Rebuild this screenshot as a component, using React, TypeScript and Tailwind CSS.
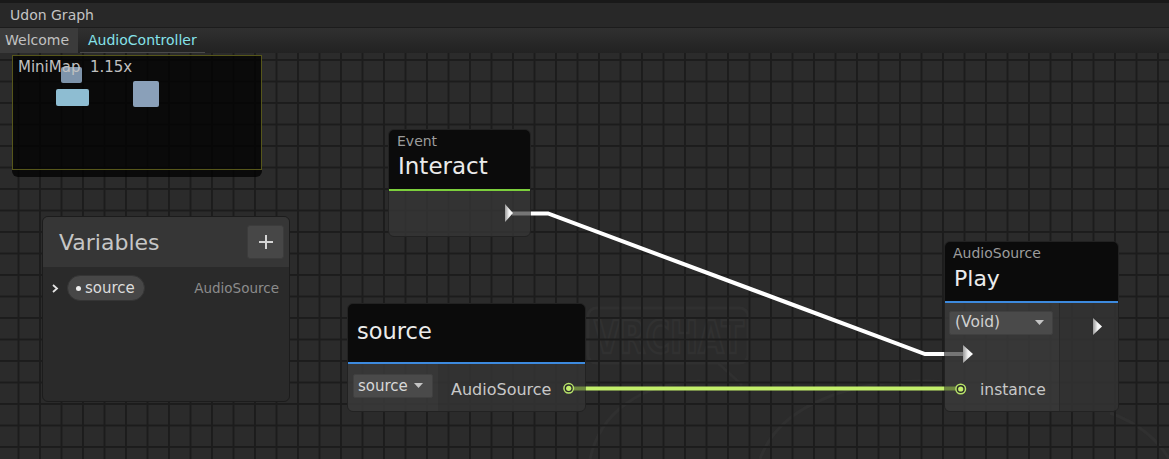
import React from "react";

function Caret() {
  return (
    <svg width="9" height="6" viewBox="0 0 9 6">
      <polygon points="0,0 9,0 4.5,5" fill="#c4c4c4" />
    </svg>
  );
}

export default function App() {
  return (
    <div className="w-[1169px] h-[459px] flex flex-col bg-[#191919] font-['DejaVu_Sans',sans-serif] overflow-hidden">
      <div className="h-[3px] bg-[#191919]" />
      <div className="h-[24px] bg-[#282828] flex items-center pl-[10px] text-[14px] text-[#c4c4c4]">
        Udon Graph
      </div>
      <div className="h-[26px] flex items-stretch border-t border-[#1c1c1c] bg-[linear-gradient(to_bottom,#303030,#222222)]">
        <div className="w-[78px] bg-[#3b3b3b] pl-[5px] flex items-center text-[14px] text-[#c2c2c2]">
          Welcome
        </div>
        <div className="ml-[2px] w-[125px] flex items-center pl-[8px] text-[14px] text-[#86e2ea] border-b border-[#4a4a4a]">
          AudioController
        </div>
      </div>

      <div className="relative flex-1 bg-[#2b2b2b] overflow-hidden">
        {/* watermark */}
        <svg className="absolute inset-0 pointer-events-none" width="1169" height="406">
          <g fill="none" stroke="#303030" strokeWidth="3">
            <rect x="588" y="255" width="160" height="55" rx="8" />
            <path d="M718 310 L742 332" />
            <path d="M590 406 C 600 360, 640 330, 700 328" />
            <path d="M760 406 C 780 350, 860 320, 960 330" />
            <path d="M1110 360 C 1140 370, 1160 390, 1169 406" />
          </g>
          <text
            x="594"
            y="300"
            fontFamily="DejaVu Sans"
            fontWeight="bold"
            fontSize="44"
            textLength="150"
            lengthAdjust="spacingAndGlyphs"
            fill="none"
            stroke="#313131"
            strokeWidth="2.5"
          >
            VRCHAT
          </text>
        </svg>

        {/* grid */}
        <div className="absolute inset-0 bg-[linear-gradient(to_right,#1c1c1c_2px,transparent_2px),linear-gradient(to_bottom,#1c1c1c_2px,transparent_2px)] bg-[length:21.5px_21.5px] bg-[position:17.5px_6px]" />

        {/* MiniMap */}
        <div className="absolute left-[12px] top-[2px] w-[250px] h-[122px] rounded-b-[6px] bg-black/75">
          <div className="relative h-[115px] border border-[#56561a]">
            <div className="absolute left-[48px] top-[11px] w-[21px] h-[16px] rounded-[2px] bg-[#8ba3bd]/90" />
            <div className="absolute left-[43px] top-[33px] w-[33px] h-[17px] rounded-[2px] bg-[#8ebdd2]" />
            <div className="absolute left-[120px] top-[25px] w-[26px] h-[26px] rounded-[2px] bg-[#8aa0b9]" />
            <div className="relative pl-[5px] pt-[1px] text-[15px] leading-[20px] text-[#c0c0c0] whitespace-pre">
              MiniMap  1.15x
            </div>
          </div>
        </div>

        {/* Variables panel */}
        <div className="absolute left-[42px] top-[163px] w-[248px] h-[186px] rounded-[6px] border border-[#1c1c1c] bg-[#2a2a2a] flex flex-col overflow-hidden">
          <div className="h-[50px] bg-[#363636] flex items-center justify-between pl-[16px] pr-[5px]">
            <span className="text-[22px] text-[#c6c6c6]">Variables</span>
            <div className="w-[37px] h-[34px] rounded-[3px] bg-[#474747] border border-[#3c3c3c] flex items-center justify-center">
              <svg width="16" height="16" viewBox="0 0 16 16">
                <path d="M8 1 V15 M1 8 H15" stroke="#d4d4d4" strokeWidth="2" />
              </svg>
            </div>
          </div>
          <div className="mt-[8px] flex items-center pl-[9px] pr-[10px]">
            <svg width="7" height="9" viewBox="0 0 7 9">
              <polyline points="1,1 5,4.5 1,8" fill="none" stroke="#e4e4e4" strokeWidth="1.8" />
            </svg>
            <div className="ml-[8px] w-[78px] h-[26px] rounded-full bg-[#474747] border border-[#353535] flex items-center pl-[8px]">
              <div className="w-[5px] h-[5px] rounded-full bg-[#f0f0f0]" />
              <span className="ml-[4px] text-[15px] text-[#dcdcdc]">source</span>
            </div>
            <span className="ml-auto text-[13.5px] text-[#8c8c8c]">AudioSource</span>
          </div>
        </div>

        {/* Interact node */}
        <div className="absolute left-[388px] top-[76px] w-[143px] h-[108px] rounded-[6px] border border-[#222222] overflow-hidden flex flex-col">
          <div className="h-[59px] bg-[#0b0b0b] pl-[8px] pt-[2px] flex flex-col">
            <span className="text-[14px] leading-[18px] text-[#9c9c9c]">Event</span>
            <span className="mt-[2px] pl-[1px] text-[23px] leading-[28px] text-[#ebebeb]">Interact</span>
          </div>
          <div className="h-[2px] bg-[#7ccf3c]" />
          <div className="flex-1 bg-[#363636]/80" />
        </div>

        {/* source node */}
        <div className="absolute left-[347px] top-[250px] w-[239px] h-[109px] rounded-[6px] border border-[#222222] overflow-hidden flex flex-col">
          <div className="h-[58px] bg-[#0b0b0b] flex items-center pl-[9px] pb-[4px]">
            <span className="text-[22.5px] leading-[28px] text-[#ebebeb]">source</span>
          </div>
          <div className="h-[2px] bg-[#3d8ade]" />
          <div className="flex-1 flex">
            <div className="w-[90px] bg-[#3a3a3a]/85 pl-[5px] pt-[10px]">
              <div className="w-[80px] h-[24px] rounded-[2px] bg-[#4a4a4a] border border-[#404040] flex items-center justify-between pl-[4px] pr-[9px]">
                <span className="text-[15px] text-[#d8d8d8]">source</span>
                <Caret />
              </div>
            </div>
            <div className="flex-1 bg-[#343434]/85 flex items-center pl-[13px] pt-[4px]">
              <span className="text-[16px] text-[#c8c8c8]">AudioSource</span>
            </div>
          </div>
        </div>

        {/* Play node */}
        <div className="absolute left-[944px] top-[188px] w-[175px] h-[171px] rounded-[6px] border border-[#222222] overflow-hidden flex flex-col">
          <div className="h-[59px] bg-[#0b0b0b] pl-[8px] pt-[2px] flex flex-col">
            <span className="text-[14px] leading-[18px] text-[#9c9c9c]">AudioSource</span>
            <span className="mt-[3px] pl-[1px] text-[22px] leading-[28px] text-[#ebebeb]">Play</span>
          </div>
          <div className="h-[2px] bg-[#3d8ade]" />
          <div className="flex-1 flex">
            <div className="w-[114px] bg-[#3a3a3a]/85 pl-[4px] pt-[8px] flex flex-col">
              <div className="w-[104px] h-[24px] rounded-[2px] bg-[#4a4a4a] border border-[#404040] flex items-center justify-between pl-[5px] pr-[8px]">
                <span className="text-[15.5px] text-[#d0d0d0]">(Void)</span>
                <Caret />
              </div>
              <div className="mt-[44px] h-[24px] flex items-center pl-[31px]">
                <span className="text-[15.5px] text-[#c8c8c8]">instance</span>
              </div>
            </div>
            <div className="flex-1 bg-[#323232]/85 border-l border-[#2a2a2a]" />
          </div>
        </div>

        {/* edges, ports, flow arrows */}
        <svg className="absolute inset-0 pointer-events-none" width="1169" height="406">
          <defs>
            <linearGradient id="arr" x1="0" y1="0" x2="1" y2="0">
              <stop offset="0" stopColor="#9a9a9a" />
              <stop offset="0.5" stopColor="#f2f2f2" />
              <stop offset="1" stopColor="#ffffff" />
            </linearGradient>
          </defs>
          <line x1="512" y1="160.5" x2="531" y2="160.5" stroke="#767676" strokeWidth="4" />
          <polyline
            points="531,160.5 548,160.5 925,301 944,301"
            fill="none"
            stroke="#ffffff"
            strokeWidth="4"
          />
          <line x1="944" y1="301" x2="964" y2="301" stroke="#767676" strokeWidth="4" />
          <polygon points="505,151 505,169 513,160" fill="url(#arr)" />
          <polygon points="963,292 963,310 973,301" fill="url(#arr)" />
          <polygon points="1093,265 1093,282 1102,273.5" fill="url(#arr)" />

          <line x1="574" y1="335.5" x2="586" y2="335.5" stroke="#6e8840" strokeWidth="4" />
          <line x1="586" y1="335.5" x2="944" y2="335.5" stroke="#c3ef6b" strokeWidth="4" />
          <line x1="944" y1="335.5" x2="956" y2="335.5" stroke="#6e8840" strokeWidth="4" />
          <circle cx="568.7" cy="335.3" r="4.8" fill="#2a2a2a" stroke="#b8e46a" strokeWidth="1.5" />
          <circle cx="568.7" cy="335.3" r="2.6" fill="#c4f06c" />
          <circle cx="960.7" cy="336" r="4.8" fill="#2a2a2a" stroke="#b8e46a" strokeWidth="1.5" />
          <circle cx="960.7" cy="336" r="2.6" fill="#c4f06c" />
        </svg>
      </div>
    </div>
  );
}
